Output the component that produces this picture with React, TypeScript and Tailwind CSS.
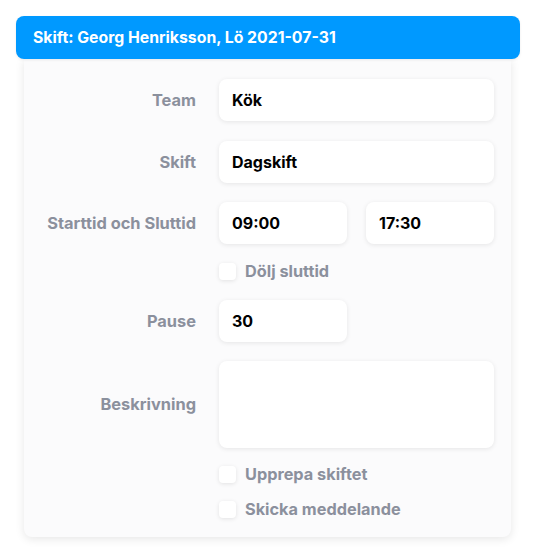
import React from "react";

const font = { fontFamily: "Inter, 'Noto Sans', sans-serif" };

function Checkbox({ label }: { label: string }) {
  return (
    <div className="flex items-center gap-[9px] h-[17px]">
      <div className="w-[17px] h-[17px] rounded-[4px] bg-white shadow-[0_1px_4px_rgba(0,0,0,0.1)]" />
      <span className="text-[16.3px] font-bold text-[#8b909d] leading-none">{label}</span>
    </div>
  );
}

function Input({ value, className = "" }: { value: string; className?: string }) {
  return (
    <div
      className={`h-[42px] bg-white rounded-[8px] shadow-[0_1px_5px_rgba(0,0,0,0.09)] flex items-center px-[13px] text-[16px] font-bold text-black ${className}`}
    >
      {value}
    </div>
  );
}

function Row({ label, children }: { label: string; children: React.ReactNode }) {
  return (
    <div className="flex items-center">
      <div className="w-[172px] text-right text-[16.4px] font-bold text-[#8b909d] leading-none whitespace-nowrap">{label}</div>
      <div className="ml-[23px] flex gap-[19px]">{children}</div>
    </div>
  );
}

export default function App() {
  return (
    <div className="w-[536px] h-[555px] bg-white pt-[16px]" style={font}>
      <div className="mx-[16px] w-[504px] h-[43px] rounded-[8px] bg-[#0099ff] flex items-center px-[17px] text-white text-[15.8px] font-bold relative z-10 shadow-[0_1px_3px_rgba(0,0,0,0.08)]">
        Skift: Georg Henriksson, Lö 2021-07-31
      </div>
      <div className="ml-[24px] w-[487px] h-[478px] bg-[#fbfbfc] rounded-b-[8px] shadow-[0_2px_10px_rgba(0,0,0,0.1)] pt-[20px] flex flex-col">
        <Row label="Team">
          <Input value="Kök" className="w-[275px]" />
        </Row>
        <div className="h-[20px]" />
        <Row label="Skift">
          <Input value="Dagskift" className="w-[275px]" />
        </Row>
        <div className="h-[19px]" />
        <Row label="Starttid och Sluttid">
          <Input value="09:00" className="w-[128px]" />
          <Input value="17:30" className="w-[128px]" />
        </Row>
        <div className="h-[19px]" />
        <div className="ml-[195px]">
          <Checkbox label="Dölj sluttid" />
        </div>
        <div className="h-[20px]" />
        <Row label="Pause">
          <Input value="30" className="w-[128px]" />
        </Row>
        <div className="h-[19px]" />
        <div className="flex items-center">
          <div className="w-[172px] text-right text-[16.4px] font-bold text-[#8b909d] leading-none">Beskrivning</div>
          <div className="ml-[23px] w-[275px] h-[87px] bg-white rounded-[8px] shadow-[0_1px_5px_rgba(0,0,0,0.09)]" />
        </div>
        <div className="h-[18px]" />
        <div className="ml-[195px]">
          <Checkbox label="Upprepa skiftet" />
        </div>
        <div className="h-[18px]" />
        <div className="ml-[195px]">
          <Checkbox label="Skicka meddelande" />
        </div>
      </div>
    </div>
  );
}
